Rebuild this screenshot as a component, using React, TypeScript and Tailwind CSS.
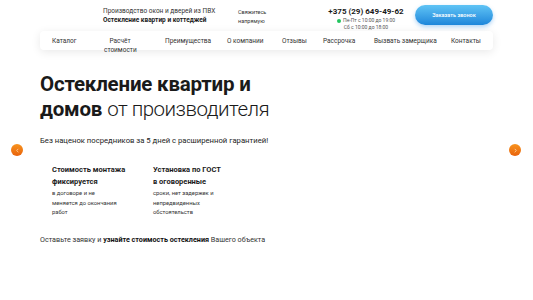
import React from 'react';

const navItems = [
  { label: 'Каталог', w: 'w-[52px]' },
  { label: 'Расчёт стоимости', w: 'w-[61px]' },
  { label: 'Преимущества', w: 'w-[62px]' },
  { label: 'О компании', w: 'w-[55px]' },
  { label: 'Отзывы', w: 'w-[41px]' },
  { label: 'Рассрочка', w: 'w-[51px]' },
  { label: 'Вызвать замерщика', w: 'w-[77px]' },
  { label: 'Контакты', w: 'w-[40px]' },
];

const features = [
  { title: ['Стоимость монтажа', 'фиксируется'], text: ['в договоре и не', 'меняется до окончания', 'работ'] },
  { title: ['Установка по ГОСТ', 'в оговоренные'], text: ['сроки, нет задержек и', 'непредвиденных', 'обстоятельств'] },
];

const Arrow = ({ dir }: { dir: 'left' | 'right' }) => (
  <div className="w-3 h-3 rounded-full bg-gradient-to-b from-[#f7931e] to-[#e8620c] flex items-center justify-center">
    <svg width="5" height="5" viewBox="0 0 6 6" fill="none" stroke="#fdd6a8" strokeWidth="1">
      {dir === 'left' ? <path d="M4 1 L2 3 L4 5" /> : <path d="M2 1 L4 3 L2 5" />}
    </svg>
  </div>
);

const App = () => {
  return (
    <div className="w-[533px] h-[300px] bg-white overflow-hidden text-[#1a1a1a]" style={{ fontFamily: 'Roboto, "Noto Sans", sans-serif' }}>
      {/* Header */}
      <header className="flex items-start h-[31px] pl-[103px] pr-[40px] pt-[5px]">
        <div className="w-[135px] pt-[2px]">
          <div className="text-[6.5px] leading-[9px] text-[#333] whitespace-nowrap">Производство окон и дверей из ПВХ</div>
          <div className="text-[6.5px] leading-[9px] font-bold whitespace-nowrap">Остекление квартир и коттеджей</div>
        </div>
        <div className="w-[93px] pt-[3px] text-[5.5px] leading-[9px] text-[#333]">
          <div>Свяжитесь</div>
          <div>напрямую</div>
        </div>
        <div className="w-[70px] pt-[1px] flex flex-col items-center">
          <div className="text-[8px] leading-[11px] font-bold whitespace-nowrap">+375 (29) 649-49-62</div>
          <div className="flex items-center gap-[2px] text-[5px] leading-[7px] text-[#555] whitespace-nowrap">
            <span className="w-[4px] h-[4px] rounded-full bg-[#22c55e]" />
            Пн-Пт с 10:00 до 19:00
          </div>
          <div className="text-[5px] leading-[7px] text-[#555] whitespace-nowrap">Сб с 10:00 до 18:00</div>
        </div>
        <button className="ml-[14px] w-[78px] h-[20px] rounded-full bg-gradient-to-b from-[#5fc4f5] to-[#1c86da] shadow-[0_2px_4px_rgba(30,136,229,0.35)] text-white text-[5.5px] font-medium">
          Заказать звонок
        </button>
      </header>

      {/* Nav */}
      <nav className="mx-[40px] h-[19px] bg-white rounded-[4px] shadow-[0_2px_10px_rgba(0,0,0,0.09)] flex items-start pl-[12px] pt-[6px] text-[6.5px] leading-[9px] text-[#333]">
        {navItems.map((item) => (
          <div key={item.label} className={`${item.w} shrink-0 whitespace-nowrap`}>
            {item.label === 'Расчёт стоимости' ? (
              <div className="w-[32px] text-center">
                <div>Расчёт</div>
                <div>стоимости</div>
              </div>
            ) : (
              item.label
            )}
          </div>
        ))}
      </nav>

      {/* Hero */}
      <section className="relative px-[40px] pt-[22px]">
        <h1 className="text-[20.5px] leading-[25px] tracking-[-0.2px]">
          <span className="font-bold">Остекление квартир и</span>
          <br />
          <span className="font-bold">домов</span> <span className="font-light tracking-[-0.5px]">от производителя</span>
        </h1>
        <p className="mt-[13px] text-[7.7px] leading-[11px] text-[#222]">Без наценок посредников за 5 дней с расширенной гарантией!</p>

        <div className="absolute left-[11px] top-[94px]"><Arrow dir="left" /></div>
        <div className="absolute right-[12px] top-[94px]"><Arrow dir="right" /></div>

        <div className="flex pl-[12px] mt-[18px] gap-[32px]">
          {features.map((f) => (
            <div key={f.title[0]} className="w-[69px]">
              <div className="text-[7.5px] leading-[12px] font-bold whitespace-nowrap">
                {f.title.map((t) => <div key={t}>{t}</div>)}
              </div>
              <div className="mt-[1px] text-[5.8px] leading-[9.5px] text-[#333] whitespace-nowrap">
                {f.text.map((t) => <div key={t}>{t}</div>)}
              </div>
            </div>
          ))}
        </div>

        <p className="mt-[17px] text-[7.2px] leading-[10px] text-[#333]">
          Оставьте заявку и <span className="font-bold text-[#111]">узнайте стоимость остекления</span> Вашего объекта
        </p>
      </section>
    </div>
  );
};

export default App;
